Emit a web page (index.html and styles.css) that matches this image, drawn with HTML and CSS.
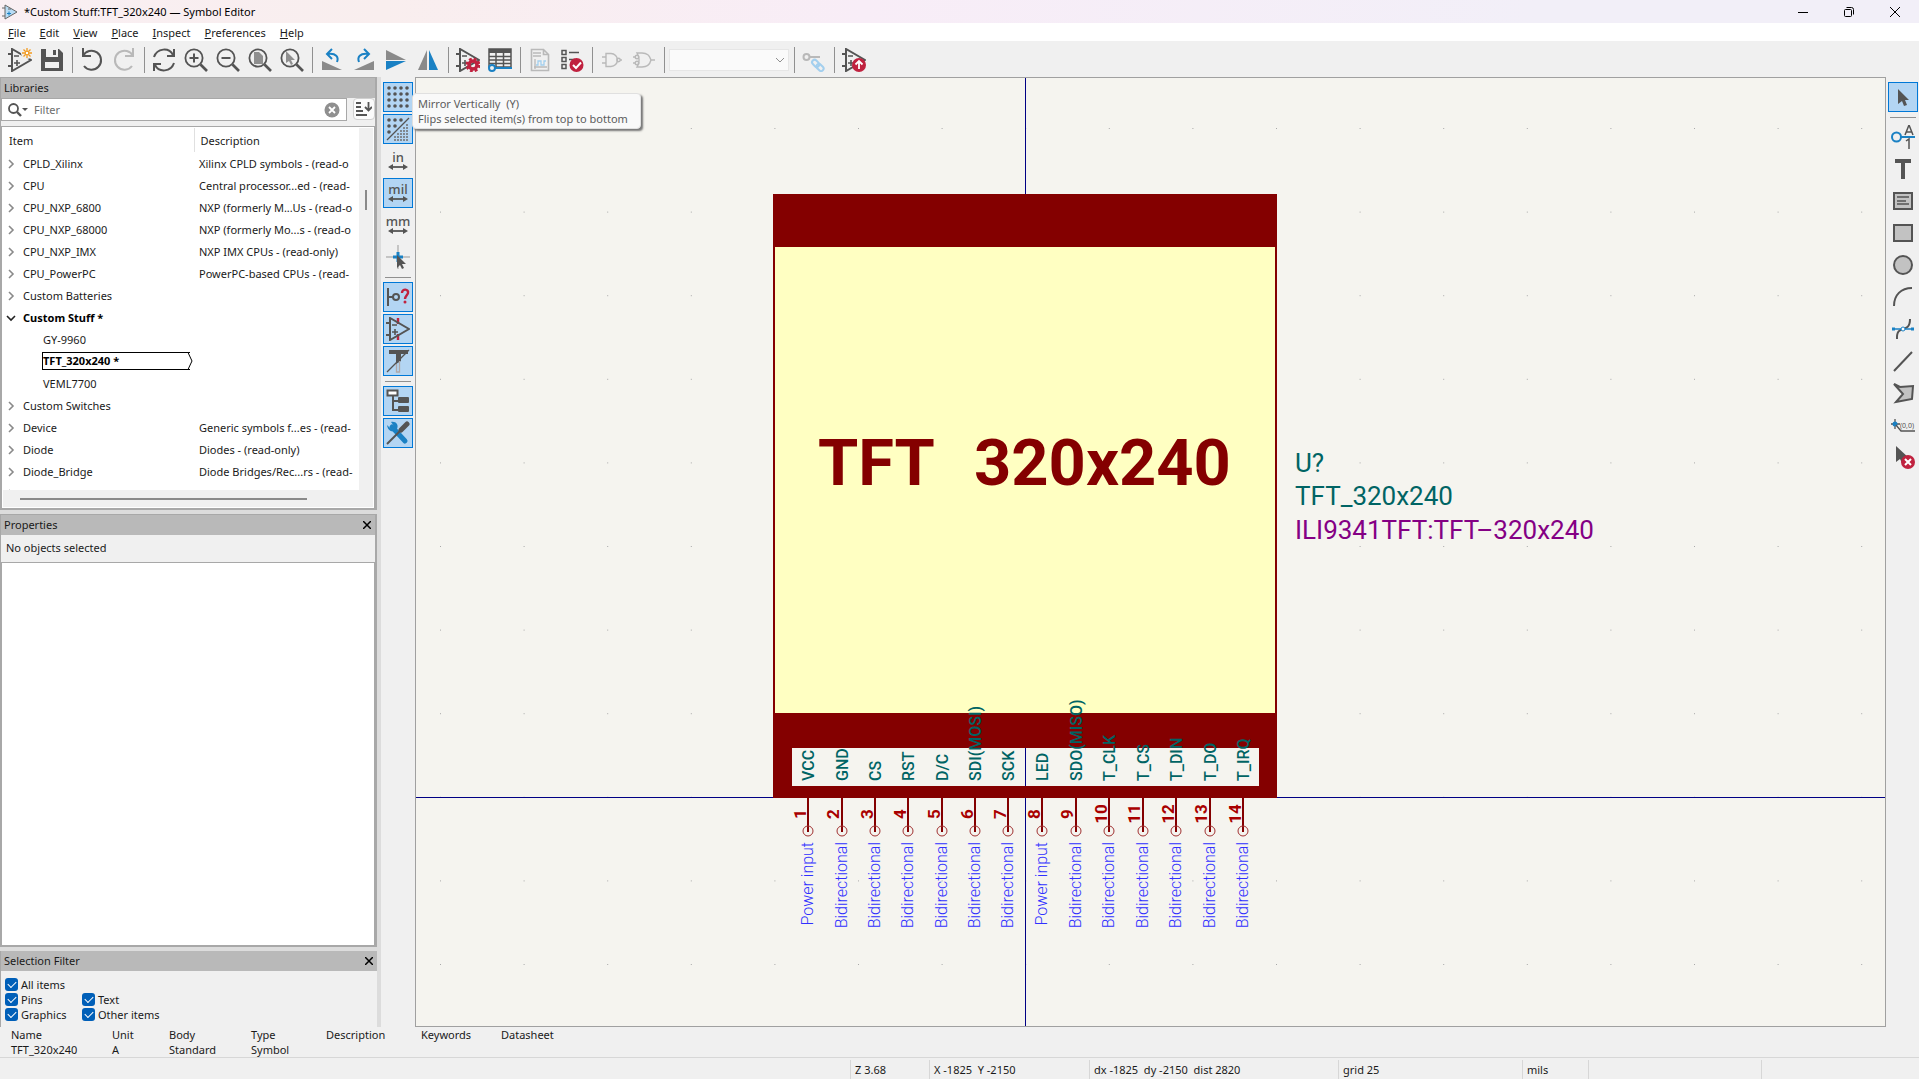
FILE: index.html
```html
<!DOCTYPE html>
<html lang="en">
<head>
<meta charset="utf-8">
<title>*Custom Stuff:TFT_320x240 — Symbol Editor</title>
<link rel="stylesheet" href="styles.css">
</head>
<body>
<svg class="defs" aria-hidden="true">
  <symbol id="opamp" viewBox="0 0 24 24"><path d="M4 1v22L23 12Z M0 6h4M0 18h4" fill="none" stroke="#545454" stroke-width="2"/><path d="M6 8h5M6 15h6M9 12v6" stroke="#545454" stroke-width="1.6"/></symbol>
  <symbol id="lens" viewBox="0 0 24 24"><circle cx="10" cy="10" r="8.6" fill="none" stroke="#545454" stroke-width="1.8"/><path d="M16.500 16.500 23 23" stroke="#545454" stroke-width="2.600"/></symbol>
  <symbol id="arrows" viewBox="0 0 24 8"><path d="M4 4h16" stroke="#545454" stroke-width="1.800"/><path d="M2 4l5-3v6zM22 4l-5-3v6z" fill="#545454"/></symbol>
  <symbol id="chev" viewBox="0 0 10 10"><path d="M3 1l4 4-4 4" fill="none" stroke="#8a8a8a" stroke-width="1.600"/></symbol>
  <symbol id="close" viewBox="0 0 8 8"><path d="M0 0l8 8M8 0L0 8" stroke="#000" stroke-width="1.500"/></symbol>
</svg>

<header class="titlebar">
  <svg width="16" height="16" viewBox="0 0 16 16"><path d="M3 1v14L15 8Z" fill="#b8dcf5" stroke="#666" /><path d="M0 4h3M0 12h3M6 5h3" stroke="#666"/><path d="M5 9.500h4M7 7.500v4" stroke="#1a81c4"/></svg>
  <h1>*Custom Stuff:TFT_320x240 — Symbol Editor</h1>
  <button class="win" aria-label="Minimize"><svg width="10" height="10"><path d="M0 5.500h10" stroke="#000"/></svg></button>
  <button class="win" aria-label="Restore"><svg width="10" height="10" fill="none" stroke="#000"><rect x=".5" y="2.500" width="7" height="7" rx="1"/><path d="M2.500.5h5a2 2 0 0 1 2 2v5"/></svg></button>
  <button class="win" aria-label="Close"><svg width="10" height="10" stroke="#000"><path d="M0 0l10 10M10 0L0 10"/></svg></button>
</header>

<nav class="menubar">
  <a href="#"><u>F</u>ile</a><a href="#"><u>E</u>dit</a><a href="#"><u>V</u>iew</a><a href="#"><u>P</u>lace</a><a href="#"><u>I</u>nspect</a><a href="#"><u>P</u>references</a><a href="#"><u>H</u>elp</a>
</nav>

<div class="toolbar">
  <button aria-label="New symbol"><svg viewBox="0 0 24 24"><use href="#opamp"/><circle cx="19" cy="5" r="6" fill="#f0f0f0"/><path d="M19 0v10M14 5h10M15.500 1.500l7 7M22.500 1.500l-7 7" stroke="#f29a1f" stroke-width="1.300"/><circle cx="19" cy="5" r="1.800" fill="#fff" stroke="#f29a1f"/></svg></button>
  <button aria-label="Save"><svg viewBox="0 0 24 24"><path d="M1 1h18l4 4v18H1Z" fill="#545454"/><path d="M6 1h12v8H6zM5 14h14v6H5z" fill="#f0f0f0"/><path d="M13 2h3v5h-3z" fill="#545454"/></svg></button>
  <span class="sep"></span>
  <button aria-label="Undo"><svg viewBox="0 0 24 24" fill="none" stroke="#545454" stroke-width="2"><path d="M3 8a9.500 9.500 0 1 1 1 10M3 0v8h8" /></svg></button>
  <button aria-label="Redo" disabled><svg viewBox="0 0 24 24" fill="none" stroke="#b9b9b9" stroke-width="2"><path d="M21 8a9.500 9.500 0 1 0-1 10M21 0v8h-8"/></svg></button>
  <span class="sep"></span>
  <button aria-label="Refresh"><svg viewBox="0 0 24 24" fill="none" stroke="#545454" stroke-width="2"><path d="M2 9C5 0 17-1 21 7M22 15C19 24 7 25 3 17"/><path d="M22 1v7h-7M2 23v-7h7"/></svg></button>
  <button aria-label="Zoom in"><svg viewBox="0 0 24 24"><use href="#lens"/><path d="M5.500 10h9M10 5.500v9" stroke="#545454" stroke-width="2"/></svg></button>
  <button aria-label="Zoom out"><svg viewBox="0 0 24 24"><use href="#lens"/><path d="M5.500 10h9" stroke="#545454" stroke-width="2"/></svg></button>
  <button aria-label="Zoom to fit"><svg viewBox="0 0 24 24"><use href="#lens"/><path d="M6 4h5l4 4v8H6z" fill="#8f8f8f"/></svg></button>
  <button aria-label="Zoom to selection"><svg viewBox="0 0 24 24"><use href="#lens"/><path d="M6 3v12l3-2 2 4 2-1-2-4h4z" fill="#8f8f8f"/></svg></button>
  <span class="sep"></span>
  <button aria-label="Rotate counterclockwise"><svg viewBox="0 0 24 24"><path d="M2 13v9h20z" fill="#8a8a8a"/><path d="M17 14c2-5-1-9-9-8" fill="none" stroke="#1a81c4" stroke-width="2"/><path d="M12 1L7 6l5 5" fill="none" stroke="#1a81c4" stroke-width="2"/></svg></button>
  <button aria-label="Rotate clockwise"><svg viewBox="0 0 24 24"><path d="M22 13v9H2z" fill="#8a8a8a"/><path d="M7 14c-2-5 1-9 9-8" fill="none" stroke="#1a81c4" stroke-width="2"/><path d="M12 1l5 5-5 5" fill="none" stroke="#1a81c4" stroke-width="2"/></svg></button>
  <button aria-label="Mirror vertically"><svg viewBox="0 0 24 24"><path d="M2 2v10h20z" fill="#8a8a8a"/><path d="M2 22v-9h20z" fill="#1a81c4"/></svg></button>
  <button aria-label="Mirror horizontally"><svg viewBox="0 0 24 24"><path d="M2 22h9V2z" fill="#8a8a8a"/><path d="M22 22h-9V2z" fill="#1a81c4"/></svg></button>
  <span class="sep"></span>
  <button aria-label="Symbol properties"><svg viewBox="0 0 24 24"><use href="#opamp"/><circle cx="17" cy="17" r="4" fill="none" stroke="#c0223f" stroke-width="3.500"/><circle cx="17" cy="17" r="6.200" fill="none" stroke="#c0223f" stroke-width="2.400" stroke-dasharray="2.800 2.070"/></svg></button>
  <button aria-label="Pin table"><svg viewBox="0 0 24 24"><path d="M1 1h22v18H1zM1 8.500h22M1 12h22M1 15.500h22M8 4v15M15.500 4v15" fill="none" stroke="#545454" stroke-width="1.500"/><path d="M1 1h22v4H1z" fill="#545454"/><path d="M7 20h17" stroke="#1a81c4" stroke-width="2"/><circle cx="4" cy="20" r="3" fill="#f0f0f0" stroke="#1a81c4" stroke-width="2"/></svg></button>
  <span class="sep"></span>
  <button aria-label="Datasheet" disabled><svg viewBox="0 0 24 24" fill="none" stroke="#b9b9b9"><path d="M3.500 1.500h12l5 5v16h-17zM15.500 1.500v5h5" stroke-width="1.600"/><path d="M5 5h8M5 8h8M7 11v10M6 19h13" stroke-width="1.300"/><path d="M8 17h2v-4h3v4h3v-4h2" stroke="#a3cfee" stroke-width="1.300"/></svg></button>
  <button aria-label="Check symbol"><svg viewBox="0 0 24 24" fill="none" stroke="#545454"><path d="M2 2.500h4v4H2zM2 9.500h4v4H2zM2 16.500h4v4H2z" stroke-width="1.500"/><path d="M9 4.500h10M9 11.500h6" stroke-width="1.600"/><circle cx="16.500" cy="17" r="7" fill="#c0223f" stroke="none"/><path d="M13 17l3 3 5-5.500" stroke="#fff" stroke-width="2"/></svg></button>
  <span class="sep"></span>
  <button aria-label="Standard body style" disabled><svg viewBox="0 0 24 24" fill="none" stroke="#b9b9b9" stroke-width="1.400"><path d="M6 5.500h5a6.500 6.500 0 0 1 0 13H6zM2 9h4M2 15h4M20 12h2"/><circle cx="18.500" cy="12" r="1.700"/></svg></button>
  <button aria-label="Alternate body style" disabled><svg viewBox="0 0 24 24" fill="none" stroke="#b9b9b9" stroke-width="1.400"><path d="M5 5h5c5 0 8 3 9 7-1 4-4 7-9 7H5c3-5 3-9 0-14zM1 9h2M1 15h2M19 12h4"/><circle cx="5" cy="9" r="1.800"/><circle cx="5" cy="15" r="1.800"/></svg></button>
  <span class="sep"></span>
  <select class="unit" aria-label="Unit" disabled><option></option></select>
  <svg class="caret" width="10" height="6"><path d="M1 1l4 4 4-4" fill="none" stroke="#909090"/></svg>
  <span class="sep"></span>
  <button aria-label="Synchronized pins" disabled><svg viewBox="0 0 24 24" fill="none"><circle cx="4.500" cy="9" r="3" stroke="#b9b9b9" stroke-width="2"/><path d="M8 9h10" stroke="#b9b9b9" stroke-width="2"/><g stroke="#a3cfee" stroke-width="2"><rect x="10" y="13" width="8" height="5" rx="2.500" transform="rotate(45 14 15)"/><rect x="14" y="17" width="8" height="5" rx="2.500" transform="rotate(45 18 19.500)"/></g></svg></button>
  <span class="sep"></span>
  <button aria-label="Add symbol to schematic"><svg viewBox="0 0 24 24"><use href="#opamp"/><circle cx="17" cy="17" r="7" fill="#c0223f"/><path d="M17 21v-7M13.500 16.500l3.500-3.500 3.500 3.500" fill="none" stroke="#fff" stroke-width="1.800"/></svg></button>
</div>

<main class="work">
  <aside class="side">
    <section class="panel libraries">
      <h2>Libraries</h2>
      <div class="filter">
        <label class="search">
          <svg width="20" height="14" viewBox="0 0 20 14"><circle cx="5.500" cy="5.500" r="4.500" fill="none" stroke="#545454" stroke-width="1.800"/><path d="M9 9l4 4" stroke="#545454" stroke-width="2.400"/><path d="M14 5h6l-3 3z" fill="#545454"/></svg>
          <input type="text" placeholder="Filter" aria-label="Filter libraries">
          <svg width="16" height="16"><circle cx="8" cy="8" r="7.500" fill="#8f8f8f"/><path d="M5 5l6 6M11 5l-6 6" stroke="#fff" stroke-width="1.800"/></svg>
        </label>
        <button class="sort" aria-label="Sort"><svg width="16" height="16" stroke="#545454" stroke-width="1.800" fill="none"><path d="M0 2h5M0 6h5M0 10h7M0 14h11M12.500 1v8M9 6l3.500 3.500L16 6"/></svg></button>
      </div>
      <div class="tree">
        <div class="rows">
        <table>
          <colgroup><col class="c-item"><col></colgroup>
          <thead><tr><th>Item</th><th>Description</th></tr></thead>
          <tbody>
            <tr><td><svg><use href="#chev"/></svg>CPLD_Xilinx</td><td>Xilinx CPLD symbols - (read-o</td></tr>
            <tr><td><svg><use href="#chev"/></svg>CPU</td><td>Central processor...ed - (read-</td></tr>
            <tr><td><svg><use href="#chev"/></svg>CPU_NXP_6800</td><td>NXP (formerly M...Us - (read-o</td></tr>
            <tr><td><svg><use href="#chev"/></svg>CPU_NXP_68000</td><td>NXP (formerly Mo...s - (read-o</td></tr>
            <tr><td><svg><use href="#chev"/></svg>CPU_NXP_IMX</td><td>NXP IMX CPUs - (read-only)</td></tr>
            <tr><td><svg><use href="#chev"/></svg>CPU_PowerPC</td><td>PowerPC-based CPUs - (read-</td></tr>
            <tr><td><svg><use href="#chev"/></svg>Custom Batteries</td><td></td></tr>
            <tr class="open"><td><svg viewBox="0 0 10 10"><path d="M1 3l4 4 4-4" fill="none" stroke="#222" stroke-width="1.600"/></svg>Custom Stuff *</td><td></td></tr>
            <tr class="child"><td>GY-9960</td><td></td></tr>
            <tr class="child current"><td><span class="tag">TFT_320x240 *<svg width="6" height="18" viewBox="0 0 6 18"><path d="M0 .5h1l4 8.500-4 8.500H0" fill="#fff" stroke="#000"/></svg></span></td><td></td></tr>
            <tr class="child"><td>VEML7700</td><td></td></tr>
            <tr><td><svg><use href="#chev"/></svg>Custom Switches</td><td></td></tr>
            <tr><td><svg><use href="#chev"/></svg>Device</td><td>Generic symbols f...es - (read-</td></tr>
            <tr><td><svg><use href="#chev"/></svg>Diode</td><td>Diodes - (read-only)</td></tr>
            <tr><td><svg><use href="#chev"/></svg>Diode_Bridge</td><td>Diode Bridges/Rec...rs - (read-</td></tr>
            <tr><td><svg><use href="#chev"/></svg>Diode_Laser</td><td>Laser diodes - (read-only)</td></tr>
          </tbody>
        </table>
        </div>
        <div class="vbar"><span></span></div>
        <div class="hbar"><span></span></div>
      </div>
    </section>

    <section class="panel properties">
      <h2>Properties<button aria-label="Close properties"><svg width="8" height="8"><use href="#close"/></svg></button></h2>
      <p>No objects selected</p>
      <div class="grid"></div>
    </section>

    <section class="panel selection">
      <h2>Selection Filter<button aria-label="Close selection filter"><svg width="8" height="8"><use href="#close"/></svg></button></h2>
      <div class="checks">
        <label class="wide"><input type="checkbox" checked>All items</label>
        <label><input type="checkbox" checked>Pins</label>
        <label><input type="checkbox" checked>Text</label>
        <label><input type="checkbox" checked>Graphics</label>
        <label><input type="checkbox" checked>Other items</label>
      </div>
    </section>
  </aside>

  <div class="tools left">
    <button class="on" aria-label="Show grid"><svg viewBox="0 0 24 24"><path d="M3 3h20M3 9h20M3 15h20M3 21h20" stroke="#545454" stroke-width="3.600" stroke-linecap="round" stroke-dasharray="0 6"/></svg></button>
    <button class="on" aria-label="Grid overrides"><svg viewBox="0 0 24 24"><path d="M3 3h13M3 9h7M3 15h1" stroke="#545454" stroke-width="3.600" stroke-linecap="round" stroke-dasharray="0 6"/><path d="M1 23L23 1" stroke="#545454" stroke-width="1.200"/><path d="M20 8h3M17 11h6M14 14h9M11 17h12M8 20h15M8 23h15" stroke="#808890" stroke-width="2" stroke-dasharray="2 1"/></svg></button>
    <button aria-label="Inches"><span>in</span><svg class="arr"><use href="#arrows"/></svg></button>
    <button class="on" aria-label="Mils"><span>mil</span><svg class="arr"><use href="#arrows"/></svg></button>
    <button aria-label="Millimeters"><span>mm</span><svg class="arr"><use href="#arrows"/></svg></button>
    <button aria-label="Full-window crosshairs"><svg viewBox="0 0 24 24"><path d="M12 0v24M0 12h24" stroke="#999"/><path d="M12 7v10M7 12h10" stroke="#1a81c4" stroke-width="3"/><path d="M11 10v13l3-3 2 4 2-1-2-4h4z" fill="#545454"/></svg></button>
    <span class="sep"></span>
    <button class="on" aria-label="Show pin electrical types"><svg viewBox="0 0 24 24"><path d="M2 3v18M2 12h5" stroke="#545454" stroke-width="2"/><circle cx="10" cy="12" r="3" fill="none" stroke="#545454" stroke-width="2"/><path d="M16 8c0-5 7-4 6 0-.5 2-3 3-3 6" fill="none" stroke="#c0223f" stroke-width="2.400"/><circle cx="19" cy="17" r="1.500" fill="#c0223f"/></svg></button>
    <button class="on" aria-label="Show hidden pins"><svg viewBox="0 0 24 24"><path d="M12 1v6M12 17v6" stroke="#c0223f" stroke-width="2.400"/><use href="#opamp"/></svg></button>
    <button class="on" aria-label="Show hidden fields"><svg viewBox="0 0 24 24"><path d="M3 3h19" stroke="#545454" stroke-width="4"/><path d="M10 3h5v9l-5 3z" fill="#545454"/><path d="M10.500 15v8h3V12" fill="none" stroke="#b0a8a8" stroke-width="1.300"/><path d="M1 23L23 1" stroke="#545454" stroke-width="1.300"/></svg></button>
    <span class="sep"></span>
    <button class="on" aria-label="Library tree"><svg viewBox="0 0 24 24"><path d="M1.500 1.500h10v5h-10z" fill="#fff" stroke="#545454" stroke-width="2"/><path d="M7 7v14h6M7 12h6" fill="none" stroke="#545454" stroke-width="2"/><rect x="12" y="8" width="11" height="6" rx="1" fill="#545454"/><rect x="12" y="17" width="11" height="6" rx="1" fill="#545454"/></svg></button>
    <button class="on" aria-label="Properties manager"><svg viewBox="0 0 24 24"><path d="M6 6l13 14" stroke="#1a81c4" stroke-width="5" stroke-linecap="round"/><path d="M1 4l4 4 3-3-3-4c5-1 8 3 6 7-3 4-9 3-10-4z" fill="#1a81c4"/><path d="M1 23L16 8" stroke="#545454" stroke-width="2"/><path d="M15 9l6-6" stroke="#545454" stroke-width="5" stroke-linecap="round"/></svg></button>
  </div>

  <div class="canvas">
    <svg class="drawing" width="100%" height="100%">
      <defs>
        <pattern id="dots" x="24" y="50" width="83.600" height="83.600" patternUnits="userSpaceOnUse"><rect width="1" height="1" fill="#a8a8a8"/></pattern>
      </defs>
      <rect width="100%" height="100%" fill="url(#dots)"/>
      <g transform="translate(-416 -78)">
        <path class="axis" d="M1025.500 78v2000M0 797.500h4000"/>
        <rect x="774" y="195" width="502" height="520" fill="#ffffc2" stroke="#840000" stroke-width="2"/>
        <path class="frame" d="M773 194h504v53H773z"/>
        <path class="frame" fill-rule="evenodd" d="M773 713h504v85H773zM792 748v38h467v-38z"/>
        <g class="title"><text x="818" y="485">TFT</text><text x="974" y="485">320x240</text></g>
        <g class="field"><text x="1295" y="472">U?</text><text x="1295" y="505">TFT_320x240</text><text class="foot" x="1295" y="539">ILI9341TFT:TFT–320x240</text></g>
        <g class="pins">
          <path d="M808 798v34M842 798v34M875 798v34M908 798v34M942 798v34M975 798v34M1008 798v34M1042 798v34M1076 798v34M1109 798v34M1143 798v34M1176 798v34M1210 798v34M1243 798v34"/>
          <g class="ends"><circle cx="808" cy="831" r="5"/><circle cx="842" cy="831" r="5"/><circle cx="875" cy="831" r="5"/><circle cx="908" cy="831" r="5"/><circle cx="942" cy="831" r="5"/><circle cx="975" cy="831" r="5"/><circle cx="1008" cy="831" r="5"/><circle cx="1042" cy="831" r="5"/><circle cx="1076" cy="831" r="5"/><circle cx="1109" cy="831" r="5"/><circle cx="1143" cy="831" r="5"/><circle cx="1176" cy="831" r="5"/><circle cx="1210" cy="831" r="5"/><circle cx="1243" cy="831" r="5"/></g>
        </g>
        <g transform="rotate(-90)">
          <g class="name"><text x="-781" y="814">VCC</text><text x="-781" y="848">GND</text><text x="-781" y="881">CS</text><text x="-781" y="914">RST</text><text x="-781" y="948">D/C</text><text x="-781" y="981">SDI(MOSI)</text><text x="-781" y="1014">SCK</text><text x="-781" y="1048">LED</text><text x="-781" y="1082">SDO(MISO)</text><text x="-781" y="1115">T_CLK</text><text x="-781" y="1149">T_CS</text><text x="-781" y="1182">T_DIN</text><text x="-781" y="1216">T_DO</text><text x="-781" y="1249">T_IRQ</text></g>
          <g class="num"><text x="-814" y="806">1</text><text x="-814" y="839">2</text><text x="-814" y="873">3</text><text x="-814" y="906">4</text><text x="-814" y="940">5</text><text x="-814" y="973">6</text><text x="-814" y="1006">7</text><text x="-814" y="1040">8</text><text x="-814" y="1073">9</text><text x="-814" y="1107">10</text><text x="-814" y="1140">11</text><text x="-814" y="1174">12</text><text x="-814" y="1207">13</text><text x="-814" y="1241">14</text></g>
          <g class="kind"><text x="-842" y="813">Power input</text><text x="-842" y="847">Bidirectional</text><text x="-842" y="880">Bidirectional</text><text x="-842" y="913">Bidirectional</text><text x="-842" y="947">Bidirectional</text><text x="-842" y="980">Bidirectional</text><text x="-842" y="1013">Bidirectional</text><text x="-842" y="1047">Power input</text><text x="-842" y="1081">Bidirectional</text><text x="-842" y="1114">Bidirectional</text><text x="-842" y="1148">Bidirectional</text><text x="-842" y="1181">Bidirectional</text><text x="-842" y="1215">Bidirectional</text><text x="-842" y="1248">Bidirectional</text></g>
        </g>
      </g>
    </svg>
    <div class="tooltip" role="tooltip">Mirror Vertically&nbsp; (Y)<br>Flips selected item(s) from top to bottom</div>
  </div>

  <div class="tools right">
    <button class="on" aria-label="Select"><svg viewBox="0 0 24 24"><path d="M7 4v15l4-3 2 5 3-1-2-5h4z" fill="#545454"/></svg></button>
    <span class="sep"></span>
    <button aria-label="Add pin"><svg viewBox="0 0 24 24" fill="none"><circle cx="5.500" cy="12" r="4.500" stroke="#1a81c4" stroke-width="2"/><path d="M10 12h14" stroke="#1a81c4" stroke-width="2"/><path d="M14 10l4-10 4 10M15 7h6M15 16l3-2v10" stroke="#545454" stroke-width="1.500"/></svg></button>
    <button aria-label="Add text"><svg viewBox="0 0 24 24"><path d="M4 4h16M12 4v18" stroke="#545454" stroke-width="4"/></svg></button>
    <button aria-label="Add text box"><svg viewBox="0 0 24 24"><path d="M3 4h18v16H3z" fill="#c2c2c2" stroke="#545454" stroke-width="2"/><path d="M6 8h12M6 12h9M6 15h12" stroke="#545454" stroke-width="1.300"/></svg></button>
    <button aria-label="Add rectangle"><svg viewBox="0 0 24 24"><path d="M3 4h18v16H3z" fill="#c2c2c2" stroke="#545454" stroke-width="2"/></svg></button>
    <button aria-label="Add circle"><svg viewBox="0 0 24 24"><circle cx="12" cy="12" r="9" fill="#c2c2c2" stroke="#545454" stroke-width="2"/></svg></button>
    <button aria-label="Add arc"><svg viewBox="0 0 24 24"><path d="M3 21C3 10 10 3 21 3" fill="none" stroke="#545454" stroke-width="2"/></svg></button>
    <button aria-label="Add Bézier"><svg viewBox="0 0 24 24" fill="none"><path d="M6 22c-1-16 13-4 13-20" stroke="#545454" stroke-width="2"/><path d="M2 12h19" stroke="#1a81c4" stroke-width="1.500"/><path d="M1 10.500h3v3H1zM20 10.500h3v3h-3z" fill="#1a81c4"/><circle cx="12" cy="12" r="2" fill="#fff" stroke="#1a81c4"/></svg></button>
    <button aria-label="Add line"><svg viewBox="0 0 24 24"><path d="M3 22L21 3" stroke="#545454" stroke-width="2"/></svg></button>
    <button aria-label="Add polygon"><svg viewBox="0 0 24 24"><path d="M3 3l6 3 13-1-1 13-16 3 7-8z" fill="#c2c2c2" stroke="#545454" stroke-width="2"/></svg></button>
    <button aria-label="Set anchor"><svg viewBox="0 0 24 24"><path d="M4 6v10M0 11h9" stroke="#545454" stroke-width="1.300"/><circle cx="4" cy="11" r="2.500" fill="#1a81c4"/><path d="M5 12l5 6h14" fill="none" stroke="#545454" stroke-width="1.300"/><text x="9" y="15">(0,0)</text></svg></button>
    <button aria-label="Delete"><svg viewBox="0 0 24 24"><path d="M5 1v16l4-3 3 6 3-2-2-5h5z" fill="#545454"/><circle cx="17" cy="17" r="7" fill="#c0223f"/><path d="M14 14l6 6M20 14l-6 6" stroke="#fff" stroke-width="2"/></svg></button>
  </div>
</main>

<div class="message">
  <table>
    <thead><tr><th>Name</th><th>Unit</th><th>Body</th><th>Type</th><th>Description</th><th>Keywords</th><th>Datasheet</th></tr></thead>
    <tbody><tr><td>TFT_320x240</td><td>A</td><td>Standard</td><td>Symbol</td><td></td><td></td><td></td></tr></tbody>
  </table>
</div>

<footer class="status">
  <span></span><span>Z 3.68</span><span>X -1825&nbsp; Y -2150</span><span>dx -1825&nbsp; dy -2150&nbsp; dist 2820</span><span>grid 25</span><span>mils</span><span></span><span></span>
</footer>
</body>
</html>
```
FILE: styles.css
```css
* { box-sizing: border-box; }

body {
  margin: 0;
  height: 100vh;
  display: flex;
  flex-direction: column;
  overflow: hidden;
  background: #f0f0f0;
  color: #1a1a1a;
  font: 11px/15px "Noto Sans", "Open Sans", sans-serif;
}

button, input, select { font: inherit; color: inherit; }
button { border: 0; padding: 0; background: none; display: grid; place-items: center; }
.defs { position: absolute; width: 0; height: 0; }

/* Title and menus */
.titlebar {
  display: flex;
  align-items: center;
  height: 23px;
  padding: 0 1px 0 2px;
  background: linear-gradient(90deg, #f9eff3 0, #f9eeee 20%, #f8edf7 45%, #f2eff8 80%);
}
.titlebar h1 { flex: 1; margin: 0 0 0 6px; font-size: 11px; font-weight: 400; color: #000; }
.win { width: 46px; height: 23px; }

.menubar { display: flex; gap: 14px; height: 18px; padding: 2px 8px; background: #fff; }
.menubar a { color: inherit; text-decoration: none; }

/* Horizontal toolbar */
.toolbar { display: flex; align-items: center; height: 36px; padding: 2px 4px 0; }
.toolbar button { width: 32px; height: 32px; }
.toolbar button svg, .tools button svg { width: 24px; height: 24px; }
.toolbar .sep { width: 8px; height: 26px; background: linear-gradient(#909090, #909090) center / 1px 100% no-repeat; }
.unit {
  width: 120px;
  height: 22px;
  margin-left: 1px;
  border: 1px solid #e6e6e6;
  background: #fafafa;
  opacity: 1;
  appearance: none;
}
.caret { margin: 0 5px 0 -14px; }

.work { flex: 1; min-height: 0; display: flex; }

/* Docked panels */
.side {
  width: 381px;
  display: flex;
  flex-direction: column;
  gap: 4px;
  padding-right: 4px;
  background: #dcdcdc;
}
.panel { display: flex; flex-direction: column; border: 1px solid #a8a8a8; border-width: 1px 2px 1px 1px; background: #f0f0f0; }
.panel h2 {
  display: flex;
  justify-content: space-between;
  align-items: center;
  height: 20px;
  margin: 0;
  padding: 0 4px 0 3px;
  background: #b9b9b9;
  font-size: 11px;
  line-height: 14px;
  font-weight: 400;
}

.filter { display: flex; justify-content: space-between; padding-bottom: 5px; }
.search { width: 346px; height: 23px; display: flex; align-items: center; gap: 6px; padding: 0 6px; border: 1px solid #a8a8a8; background: #fff; }
.search input { flex: 1; min-width: 0; border: 0; padding: 0; outline: 0; }
.search input::placeholder { color: #6d6d6d; opacity: 1; }
.sort { width: 22px; height: 22px; border: 1px solid #d0d0d0; border-radius: 4px; background: #fbfbfb; }

.tree {
  display: grid;
  grid-template: 362px 17px / 356px 1fr;
  border: 1px solid #a8a8a8;
  background: #fff;
  padding: 1px;
}
.rows { overflow: hidden; }
.tree table { width: 356px; table-layout: fixed; border-collapse: collapse; }
.c-item { width: 191px; }
.tree th { height: 24px; padding: 0 6px; text-align: left; font-weight: 400; }
.tree th:first-child { border-right: 1px solid #e0e0e0; }
.tree td { height: 22px; padding: 0 0 0 5px; white-space: nowrap; }
.tree td:first-child { padding-left: 3px; }
.tree td > svg { width: 10px; height: 10px; margin-right: 7px; vertical-align: -1px; }
.tree .child td:first-child { padding-left: 40px; }
.open td, .current td { font-weight: 700; color: #000; }
.tag { display: flex; justify-content: space-between; width: 148px; height: 18px; line-height: 16px; margin-left: -1px; border: 1px solid #000; border-right: 0; }
.tag svg { margin: -1px -3px 0 0; }
.vbar, .hbar { display: flex; background: #f0f0f0; }
.vbar { justify-content: center; padding-top: 62px; }
.vbar span { width: 2px; height: 20px; background: #8a8a8a; }
.hbar { grid-column: 1 / 3; align-items: center; padding-left: 17px; }
.hbar span { width: 287px; height: 2px; background: #8a8a8a; }

.properties { flex: 1; }
.properties p { margin: 0; padding: 5px; height: 27px; }
.grid { flex: 1; border: 1px solid #a8a8a8; background: #fff; }

.selection { height: 76px; border-width: 0 0 0 1px; }
.checks { display: grid; grid-template-columns: 77px 1fr; padding: 6px 4px 0; }
.checks label { display: flex; align-items: center; gap: 3px; height: 15px; }
.checks .wide { grid-column: 1 / 3; }
.checks input { appearance: none; width: 13px; height: 13px; margin: 0; border-radius: 3px; background: #005fb8; display: grid; place-items: center; }
.checks input::before { content: ""; width: 7px; height: 4px; margin-top: -2px; border: solid #fff; border-width: 0 0 1px 1px; transform: rotate(-45deg); }

/* Vertical toolbars */
.tools { display: flex; flex-direction: column; align-items: center; gap: 2px; width: 34px; padding-top: 5px; }
.tools.right { width: 33px; }
.tools button { width: 30px; height: 30px; }
.tools .on { border: 1px solid #0078d7; background: #b3d5f3; }
.tools .sep { width: 26px; height: 6px; background: linear-gradient(#909090, #909090) center / 100% 1px no-repeat; }
.tools span { font-size: 13px; line-height: 12px; color: #545454; font-weight: 500; }
.tools button .arr { width: 24px; height: 8px; }
.tools button:has(.arr) { align-content: center; }
.tools text { font: 7px "Noto Sans", sans-serif; fill: #545454; }

/* Drawing sheet */
.canvas { flex: 1; position: relative; min-width: 0; border: 1px solid #a0a0a0; background: #f5f4ef; }
.drawing { display: block; position: absolute; inset: 0; font-family: Roboto, "Noto Sans", sans-serif; }
.axis { stroke: #000084; fill: none; }
.frame { fill: #840000; }
.title { font-size: 65px; font-weight: 700; fill: #840000; }
.field { font-size: 26px; fill: #006464; }
.foot { fill: #840084; }
.pins path { stroke: #840000; stroke-width: 2; }
.ends { fill: none; stroke: #a03030; }
.name { font-size: 16px; font-weight: 500; fill: #006464; }
.num { font-size: 17px; font-weight: 700; fill: #a90000; text-anchor: middle; }
.kind { font-size: 16px; font-weight: 300; fill: #3030ff; text-anchor: end; }

.tooltip {
  position: absolute;
  left: -4px;
  top: 15px;
  padding: 2px 12px 2px 5px;
  border: 1px solid #e0e0e0;
  border-radius: 4px;
  background: #f9f9f9;
  box-shadow: 2px 2px 2px #777;
  color: #5c5c5c;
  white-space: nowrap;
}

/* Message panel and status bar */
.message { height: 31px; border-bottom: 1px solid #d7d7d7; }
.message table { border-collapse: collapse; }
.message th, .message td { padding: 0 0 0 11px; height: 15px; line-height: 14px; text-align: left; font-weight: 400; }
.message th:nth-child(1) { width: 101px; }
.message th:nth-child(2) { width: 57px; }
.message th:nth-child(3) { width: 82px; }
.message th:nth-child(4) { width: 75px; }
.message th:nth-child(5) { width: 95px; }
.message th:nth-child(6) { width: 80px; }

.status {
  display: grid;
  grid-template-columns: 1fr 79px 160px 249px 184px 66px 173px 157px;
  height: 21px;
  padding-top: 2px;
}
.status span { padding: 3px 4px 0; border-right: 1px solid #d7d7d7; white-space: nowrap; line-height: 14px; }
.status span:last-child { border-right: 0; }
```
